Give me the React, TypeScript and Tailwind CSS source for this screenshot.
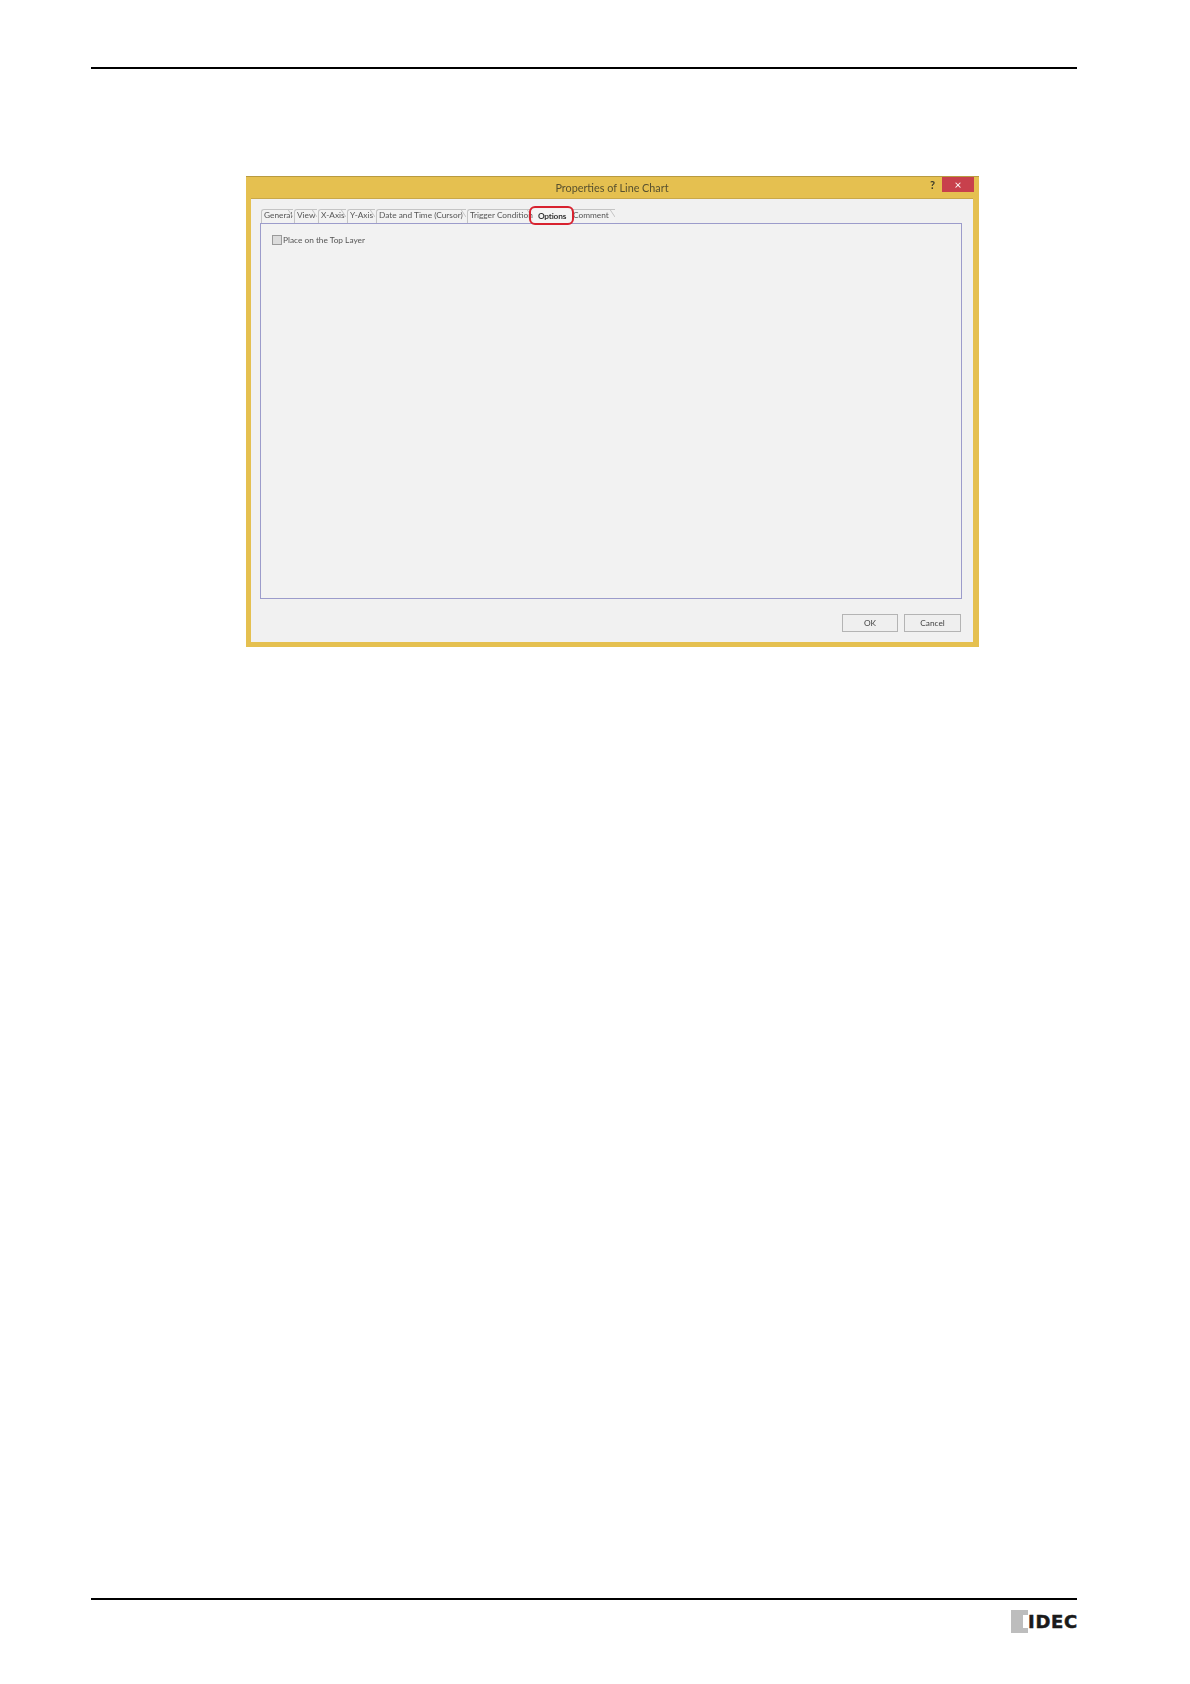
const uiFont = "font-['Lato',sans-serif]";

const tabs = [
  { label: "General", w: "w-[32px]" },
  { label: "View", w: "w-[23px]" },
  { label: "X-Axis", w: "w-[28px]" },
  { label: "Y-Axis", w: "w-[28px]" },
  { label: "Date and Time (Cursor)", w: "w-[90px]" },
  { label: "Trigger Condition", w: "w-[65px]" },
];

function Tab({ label, w }: { label: string; w: string }) {
  return (
    <div className={`relative ${w} h-[14px] shrink-0 border-t border-l border-[#c4c4c4] rounded-tl-[3px] bg-[#f2f2f2] pl-[2px] text-[8.3px] leading-[11px] whitespace-nowrap text-[#555]`}>
      {label}
      <svg className="absolute right-0 top-[-1px]" width="6" height="15" viewBox="0 0 6 15">
        <path d="M0 0.5 L1 0.5 L6 8" fill="none" stroke="#c4c4c4" strokeWidth="1" />
      </svg>
    </div>
  );
}

export default function App() {
  return (
    <div className={`w-[1190px] h-[1684px] bg-white overflow-hidden pt-[67px] ${uiFont}`}>
      <div className="ml-[91px] w-[986px] h-[2px] bg-black" />

      <div className="ml-[246px] mt-[107px] w-[733px] h-[471px] flex flex-col bg-[#e5c050] border-t border-[#b89a40] pl-[5px] pr-[6px] pb-[5px] blur-[0.25px]">
        {/* title bar */}
        <div className="relative h-[22px] shrink-0 flex items-center justify-center pt-[2px] text-[10.8px] text-[#57502f] border-b border-[#c9a84a]">
          Properties of Line Chart
          <span className="absolute right-[38px] top-[1px] text-[11px] font-bold leading-[14px] text-[#3a3a2a]">?</span>
          <div className="absolute right-[-1px] top-0 w-[32px] h-[15px] bg-[#c8404c] flex items-center justify-center text-white text-[12px] leading-none">
            ×
          </div>
        </div>

        <div className="flex-1 flex flex-col bg-[#f1f1f1] pl-[9px] pr-[11px] pt-[10px] pb-[10px]">
          {/* tabs */}
          <div className="flex pl-[1px] h-[14px] shrink-0 gap-[1px]">
            {tabs.map((t) => (
              <Tab key={t.label} label={t.label} w={t.w} />
            ))}
            <div className="relative z-10 w-[38px] h-[14px] shrink-0 bg-[#f4f4f4] text-[8.3px] leading-[15px] text-center font-bold tracking-[-0.2px] text-[#333]">
              Options
              <div className="absolute -left-[4px] -right-[3px] -top-[3px] -bottom-[2px] border-2 border-[#d8222f] rounded-[6px]" />
            </div>
            <div className="-ml-[2px]">
              <Tab label="Comment" w="w-[45px]" />
            </div>
          </div>

          {/* panel */}
          <div className="h-[376px] shrink-0 border border-[#9c9ccb] bg-[#f2f2f2] pl-[11px] pt-[10px]">
            <label className="flex items-center gap-[1px] text-[8.3px] leading-[12px] text-[#555]">
              <span className="w-[10px] h-[10px] border border-[#9a9a9a] bg-[#dcdcdc]" />
              Place on the Top Layer
            </label>
          </div>

          {/* buttons */}
          <div className="flex justify-end gap-[6px] mt-[15px] pr-[1px]">
            <div className="w-[56px] h-[18px] border border-[#b4b4b4] bg-[#efefef] flex items-center justify-center text-[8.3px] text-[#444]">OK</div>
            <div className="w-[57px] h-[18px] border border-[#b4b4b4] bg-[#efefef] flex items-center justify-center text-[8.3px] text-[#444]">Cancel</div>
          </div>
        </div>
      </div>

      <div className="ml-[91px] mt-[951px] w-[986px] h-[2px] bg-black" />

      {/* logo */}
      <div className="ml-[1011px] mt-[10px] w-[67px] h-[23px] flex">
        <div className="w-[17px] h-[23px] shrink-0 bg-[#bdbdbd] flex items-center justify-end">
          <div className="w-[5px] h-[13px] bg-white" />
        </div>
        <span className="font-['DejaVu_Sans',sans-serif] font-bold text-[18px] leading-[23px] tracking-[0.7px] text-[#1a1a1a] [-webkit-text-stroke:0.5px_#1a1a1a]">IDEC</span>
      </div>
    </div>
  );
}
